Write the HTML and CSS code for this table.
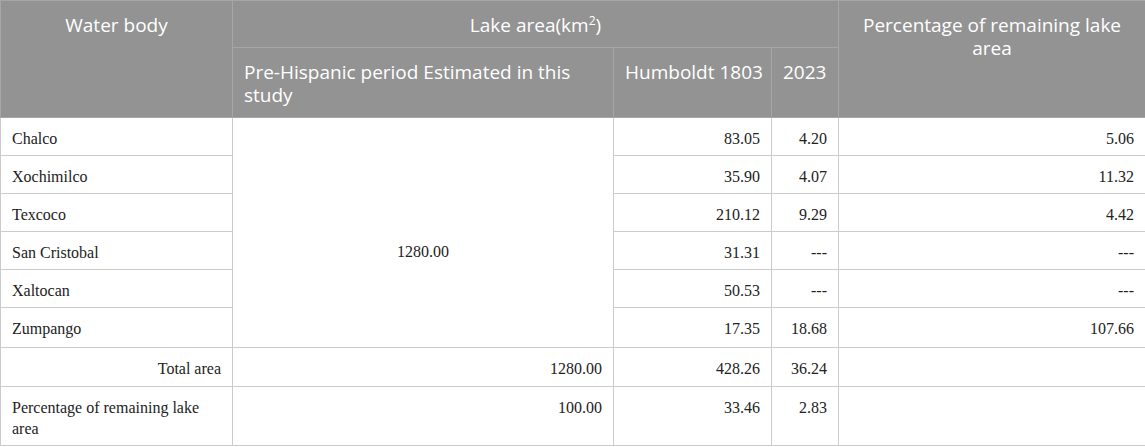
FILE: index.html
```html
<!DOCTYPE html>
<html lang="en">
<head>
<meta charset="utf-8">
<title>Lake area</title>
<link rel="stylesheet" href="styles.css">
</head>
<body>
<table class="data">
  <colgroup>
    <col class="c1"><col class="c2"><col class="c3"><col class="c4"><col class="c5">
  </colgroup>
  <thead>
    <tr>
      <th rowspan="2" class="center">Water body</th>
      <th colspan="3" class="center">Lake area(km<sup>2</sup>)</th>
      <th rowspan="2" class="center">Percentage of remaining lake area</th>
    </tr>
    <tr>
      <th>Pre-Hispanic period Estimated in this study</th>
      <th class="nowrap">Humboldt 1803</th>
      <th>2023</th>
    </tr>
  </thead>
  <tbody>
    <tr><td>Chalco</td><td rowspan="6" class="span">1280.00</td><td class="num">83.05</td><td class="num">4.20</td><td class="num">5.06</td></tr>
    <tr><td>Xochimilco</td><td class="num">35.90</td><td class="num">4.07</td><td class="num">11.32</td></tr>
    <tr><td>Texcoco</td><td class="num">210.12</td><td class="num">9.29</td><td class="num">4.42</td></tr>
    <tr><td>San Cristobal</td><td class="num">31.31</td><td class="num">---</td><td class="num">---</td></tr>
    <tr><td>Xaltocan</td><td class="num">50.53</td><td class="num">---</td><td class="num">---</td></tr>
    <tr class="r40"><td>Zumpango</td><td class="num">17.35</td><td class="num">18.68</td><td class="num">107.66</td></tr>
    <tr class="r39"><td class="num">Total area</td><td class="num">1280.00</td><td class="num">428.26</td><td class="num">36.24</td><td></td></tr>
    <tr class="rlast"><td>Percentage of remaining lake area</td><td class="num">100.00</td><td class="num">33.46</td><td class="num">2.83</td><td></td></tr>
  </tbody>
</table>
</body>
</html>
```

FILE: styles.css
```css
html, body {
  margin: 0;
  padding: 0;
  background: #ffffff;
}

.data {
  width: 1145px;
  border-collapse: collapse;
  table-layout: fixed;
  border: 1px solid #c8c8c8;
}

.c1 { width: 232px; }
.c2 { width: 381px; }
.c3 { width: 158px; }
.c4 { width: 67px; }
.c5 { width: 307px; }

.data th {
  background: #939393;
  color: #ffffff;
  font-family: "Open Sans", "DejaVu Sans", sans-serif;
  font-weight: 400;
  font-size: 19px;
  line-height: 23px;
  text-align: left;
  vertical-align: top;
  padding: 13px 11px 10px;
  border: 1px solid #a6a6a6;
}

.data th.center {
  text-align: center;
}

.data th.nowrap {
  white-space: nowrap;
}

.data sup {
  font-size: 12px;
  line-height: 0;
  vertical-align: 7px;
}

.data td {
  font-family: "Liberation Serif", "Times New Roman", serif;
  font-size: 16px;
  line-height: 21px;
  color: #222222;
  text-align: left;
  vertical-align: top;
  padding: 10px 11px 6px;
  border: 1px solid #cccccc;
}

.data tr.r40 td {
  padding-bottom: 8px;
}

.data tr.r39 td {
  padding-bottom: 7px;
}

.data tr.rlast td {
  padding-bottom: 6px;
}

.data td.num {
  text-align: right;
}

.data td.span {
  text-align: center;
  vertical-align: middle;
  padding-top: 48px;
  padding-bottom: 10px;
}
```
